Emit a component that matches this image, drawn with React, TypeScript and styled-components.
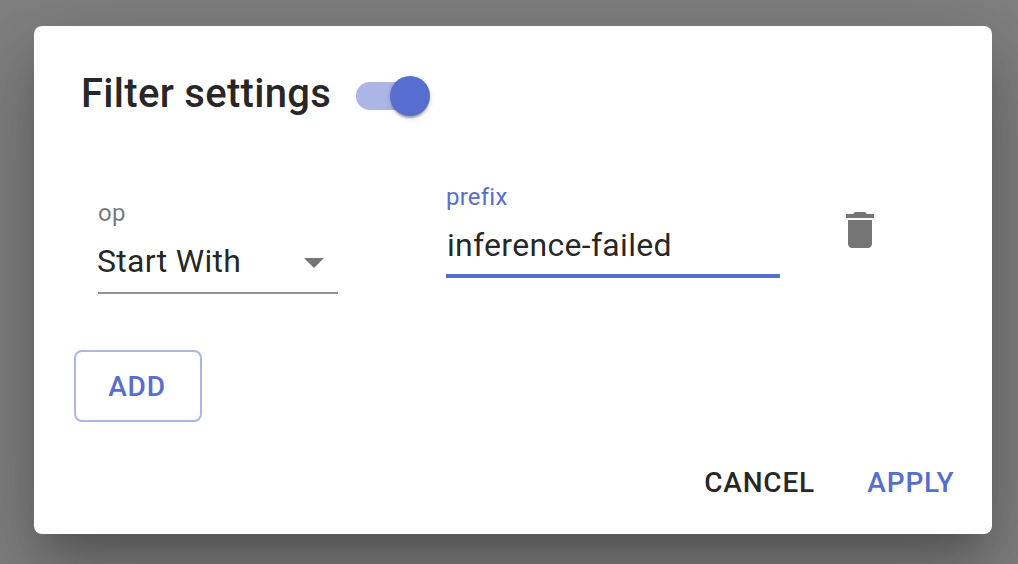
import React, { useState } from "react";
import styled, { createGlobalStyle } from "styled-components";

const PRIMARY = "#576ecf";
const PRIMARY_LIGHT = "#abb6e7";
const TEXT = "rgba(0, 0, 0, 0.87)";
const TEXT_MUTED = "rgba(0, 0, 0, 0.54)";

const GlobalStyle = createGlobalStyle`
  *, *::before, *::after { box-sizing: border-box; }
  body {
    margin: 0;
    font-family: Roboto, "Liberation Sans", sans-serif;
    color: ${TEXT};
  }
`;

const Backdrop = styled.div`
  width: 100%;
  height: 564px;
  padding: 26px 26px 30px 34px;
  background: #808080;
  overflow: hidden;
`;

const Dialog = styled.section`
  display: flex;
  flex-direction: column;
  height: 508px;
  border-radius: 8px;
  background: #fff;
  box-shadow: 0 22px 30px -14px rgba(0, 0, 0, 0.2),
    0 48px 76px 6px rgba(0, 0, 0, 0.14), 0 18px 92px 16px rgba(0, 0, 0, 0.12);
`;

const Header = styled.header`
  display: flex;
  align-items: center;
  gap: 25px;
  padding: 36px 48px 0 47px;
`;

const Title = styled.h2`
  margin: 0;
  font-size: 40px;
  font-weight: 500;
  line-height: 64px;
  letter-spacing: 0.3px;
  white-space: nowrap;
`;

const Switch = styled.button<{ $on: boolean }>`
  display: flex;
  align-items: center;
  justify-content: ${(p) => (p.$on ? "flex-end" : "flex-start")};
  width: 68px;
  height: 28px;
  margin-top: 4px;
  padding: 0;
  border: 0;
  border-radius: 14px;
  background: ${(p) => (p.$on ? PRIMARY_LIGHT : "#9e9e9e")};
`;

const Thumb = styled.span<{ $on: boolean }>`
  flex: none;
  width: 40px;
  height: 40px;
  margin: 0 -6px;
  border-radius: 50%;
  background: ${(p) => (p.$on ? PRIMARY : "#fafafa")};
  box-shadow: 0 4px 2px -2px rgba(0, 0, 0, 0.2), 0 2px 2px rgba(0, 0, 0, 0.14),
    0 2px 6px rgba(0, 0, 0, 0.12);
`;

const FilterRow = styled.div`
  display: flex;
  align-items: flex-start;
  padding: 59px 48px 0 64px;
`;

const OpField = styled.label`
  width: 240px;
  margin: 16px 108px 0 0;
`;

const PrefixField = styled.label`
  width: 334px;
  margin-right: 56px;
`;

const FieldLabel = styled.span<{ $focused?: boolean }>`
  display: block;
  font-size: 24px;
  line-height: 24px;
  letter-spacing: 0.225px;
  color: ${(p) => (p.$focused ? PRIMARY : TEXT_MUTED)};
`;

const Icon = styled.svg`
  display: block;
  flex: none;
  width: 48px;
  height: 48px;
  fill: #757575;
`;

const SelectBox = styled.div`
  display: flex;
  align-items: center;
  justify-content: space-between;
  height: 69px;
  padding-top: 5px;
  border-bottom: 2px solid #949494;
  font-size: 32px;
  line-height: 38px;
  letter-spacing: 0.3px;
  span {
    margin-left: -1px;
  }
  ${Icon} {
    margin-top: 2px;
  }
`;

const TextInput = styled.input`
  display: block;
  width: 100%;
  height: 69px;
  padding: 6px 0 0 1px;
  border: 0;
  border-bottom: 4px solid ${PRIMARY};
  border-radius: 0;
  outline: none;
  background: transparent;
  font: 400 32px/38px Roboto, "Liberation Sans", sans-serif;
  letter-spacing: 0.3px;
  color: ${TEXT};
`;

const IconButton = styled.button`
  margin: 21px 0 0;
  padding: 0;
  border: 0;
  background: none;
`;

const Button = styled.button<{ $primary?: boolean; $outlined?: boolean }>`
  height: 72px;
  padding: 0;
  border: ${(p) => (p.$outlined ? `2px solid ${PRIMARY_LIGHT}` : "0")};
  border-radius: 8px;
  background: none;
  font: 500 28px/49px Roboto, "Liberation Sans", sans-serif;
  letter-spacing: 0.8px;
  color: ${(p) => (p.$primary ? PRIMARY : TEXT)};
`;

const AddRow = styled.div`
  padding: 56px 0 0 40px;
  ${Button} {
    width: 128px;
    padding-right: 2px;
  }
`;

const Actions = styled.footer`
  display: flex;
  justify-content: flex-end;
  gap: 52.4px;
  margin-top: auto;
  padding: 0 37.6px 16px;
`;

export default function App() {
  const [enabled, setEnabled] = useState(true);
  const [prefix, setPrefix] = useState("inference-failed");

  return (
    <>
      <GlobalStyle />
      <Backdrop>
        <Dialog role="dialog" aria-label="Filter settings">
          <Header>
            <Title>Filter settings</Title>
            <Switch
              $on={enabled}
              role="switch"
              aria-checked={enabled}
              onClick={() => setEnabled(!enabled)}
            >
              <Thumb $on={enabled} />
            </Switch>
          </Header>
          <FilterRow>
            <OpField>
              <FieldLabel>op</FieldLabel>
              <SelectBox>
                <span>Start With</span>
                <Icon viewBox="0 0 24 24">
                  <path d="M7 10l5 5 5-5z" />
                </Icon>
              </SelectBox>
            </OpField>
            <PrefixField>
              <FieldLabel $focused>prefix</FieldLabel>
              <TextInput
                value={prefix}
                spellCheck={false}
                onChange={(e) => setPrefix(e.target.value)}
              />
            </PrefixField>
            <IconButton aria-label="Delete">
              <Icon viewBox="0 0 24 24">
                <path d="M6 19c0 1.1.9 2 2 2h8c1.1 0 2-.9 2-2V7H6v12zM19 4h-3.5l-1-1h-5l-1 1H5v2h14V4z" />
              </Icon>
            </IconButton>
          </FilterRow>
          <AddRow>
            <Button $primary $outlined>
              ADD
            </Button>
          </AddRow>
          <Actions>
            <Button>CANCEL</Button>
            <Button $primary>APPLY</Button>
          </Actions>
        </Dialog>
      </Backdrop>
    </>
  );
}
